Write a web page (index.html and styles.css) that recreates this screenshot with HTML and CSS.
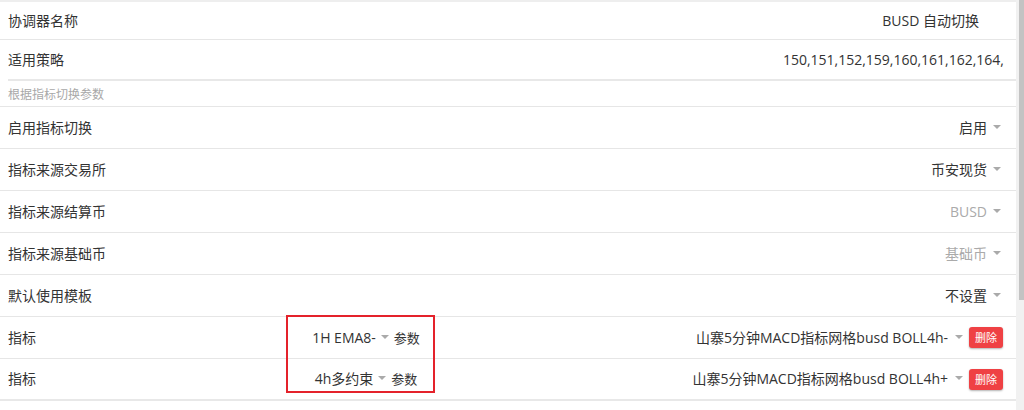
FILE: index.html
```html
<!DOCTYPE html>
<html lang="zh-CN">
<head>
<meta charset="utf-8">
<title>协调器</title>
<link rel="stylesheet" href="styles.css">
</head>
<body>
<div class="page">
  <div class="content">
    <div class="row row-first">
      <span class="label">协调器名称</span>
      <span class="value value-name">BUSD 自动切换</span>
    </div>
    <div class="row row-strategy">
      <span class="label">适用策略</span>
      <span class="value">150,151,152,159,160,161,162,164,</span>
    </div>
    <div class="section">根据指标切换参数</div>
    <div class="row row-std">
      <span class="label">启用指标切换</span>
      <span class="select">启用<i class="caret"></i></span>
    </div>
    <div class="row row-std">
      <span class="label">指标来源交易所</span>
      <span class="select">币安现货<i class="caret"></i></span>
    </div>
    <div class="row row-std">
      <span class="label">指标来源结算币</span>
      <span class="select muted">BUSD<i class="caret"></i></span>
    </div>
    <div class="row row-std">
      <span class="label">指标来源基础币</span>
      <span class="select muted">基础币<i class="caret"></i></span>
    </div>
    <div class="row row-std">
      <span class="label">默认使用模板</span>
      <span class="select">不设置<i class="caret"></i></span>
    </div>
    <div class="row row-ind">
      <span class="label">指标</span>
      <span class="mid">1H EMA8-<i class="caret caret-mid"></i><span class="param">参数</span></span>
      <span class="right">山寨5分钟MACD指标网格busd BOLL4h-<i class="caret caret-right"></i><button class="del">删除</button></span>
    </div>
    <div class="row row-ind row-last">
      <span class="label">指标</span>
      <span class="mid">4h多约束<i class="caret caret-mid"></i><span class="param">参数</span></span>
      <span class="right">山寨5分钟MACD指标网格busd BOLL4h+<i class="caret caret-right"></i><button class="del">删除</button></span>
    </div>
    <div class="annot"></div>
  </div>
  <div class="scrollbar"><div class="thumb"></div></div>
</div>
</body>
</html>
```

FILE: styles.css
```css
* { box-sizing: border-box; }
html, body {
  margin: 0;
  padding: 0;
  background: #fff;
}
body {
  font-family: "Open Sans", "Noto Sans CJK SC", sans-serif;
  font-size: 14px;
  color: #333;
  width: 1024px;
  height: 410px;
  overflow: hidden;
}
.page {
  display: flex;
  height: 410px;
}
.content {
  position: relative;
  width: 1016px;
  border-top: 2px solid #eeeeee;
}
.row {
  display: flex;
  align-items: center;
  justify-content: space-between;
  padding-left: 8px;
  border-bottom: 1px solid #e6e6e6;
  line-height: 20px;
}
.row-first {
  height: 38px;
  padding-right: 37px;
}
.row-strategy {
  height: 41px;
  margin-left: 8px;
  padding-left: 0;
  padding-right: 12px;
  border-bottom: 2px solid #e8e8e8;
}
.section {
  height: 26px;
  padding-left: 8px;
  font-size: 12px;
  color: #a8a8a8;
  display: flex;
  align-items: center;
  border-bottom: 1px solid #e6e6e6;
}
.row-std {
  height: 42px;
  padding-right: 15px;
}
.select {
  display: flex;
  align-items: center;
}
.muted { color: #aaaaaa; }
.caret {
  display: inline-block;
  width: 0;
  height: 0;
  margin-left: 6px;
  border-left: 4px solid transparent;
  border-right: 4px solid transparent;
  border-top: 4px solid #aaaaaa;
  margin-top: -2px;
}
.row-ind {
  height: 42px;
  display: grid;
  grid-template-columns: 280px 156px 1fr;
  padding-right: 13px;
}
.row-last { border-bottom: 2px solid #e8e8e8; }
.mid {
  display: flex;
  align-items: center;
  justify-content: center;
}
.caret-mid { margin-left: 5px; }
.param {
  font-size: 13px;
  margin-left: 5px;
}
.right {
  display: flex;
  align-items: center;
  justify-content: flex-end;
}
.caret-right { margin-left: 7px; }
.del {
  margin-left: 6px;
  width: 34px;
  height: 21px;
  padding: 0;
  border: none;
  border-radius: 3px;
  background: #ef4144;
  color: #fff;
  font-family: "Noto Sans CJK SC", sans-serif;
  font-size: 11px;
  line-height: 21px;
  box-shadow: 0 1px 2px rgba(0, 0, 0, 0.3);
}
.annot {
  position: absolute;
  left: 286px;
  top: 313px;
  width: 149px;
  height: 78px;
  border: 2px solid #e4222b;
}
.scrollbar {
  width: 8px;
  height: 410px;
  background: #f1f1f1;
  display: flex;
  justify-content: flex-end;
}
.thumb {
  width: 5px;
  height: 300px;
  background: #c3c3c3;
}
```
